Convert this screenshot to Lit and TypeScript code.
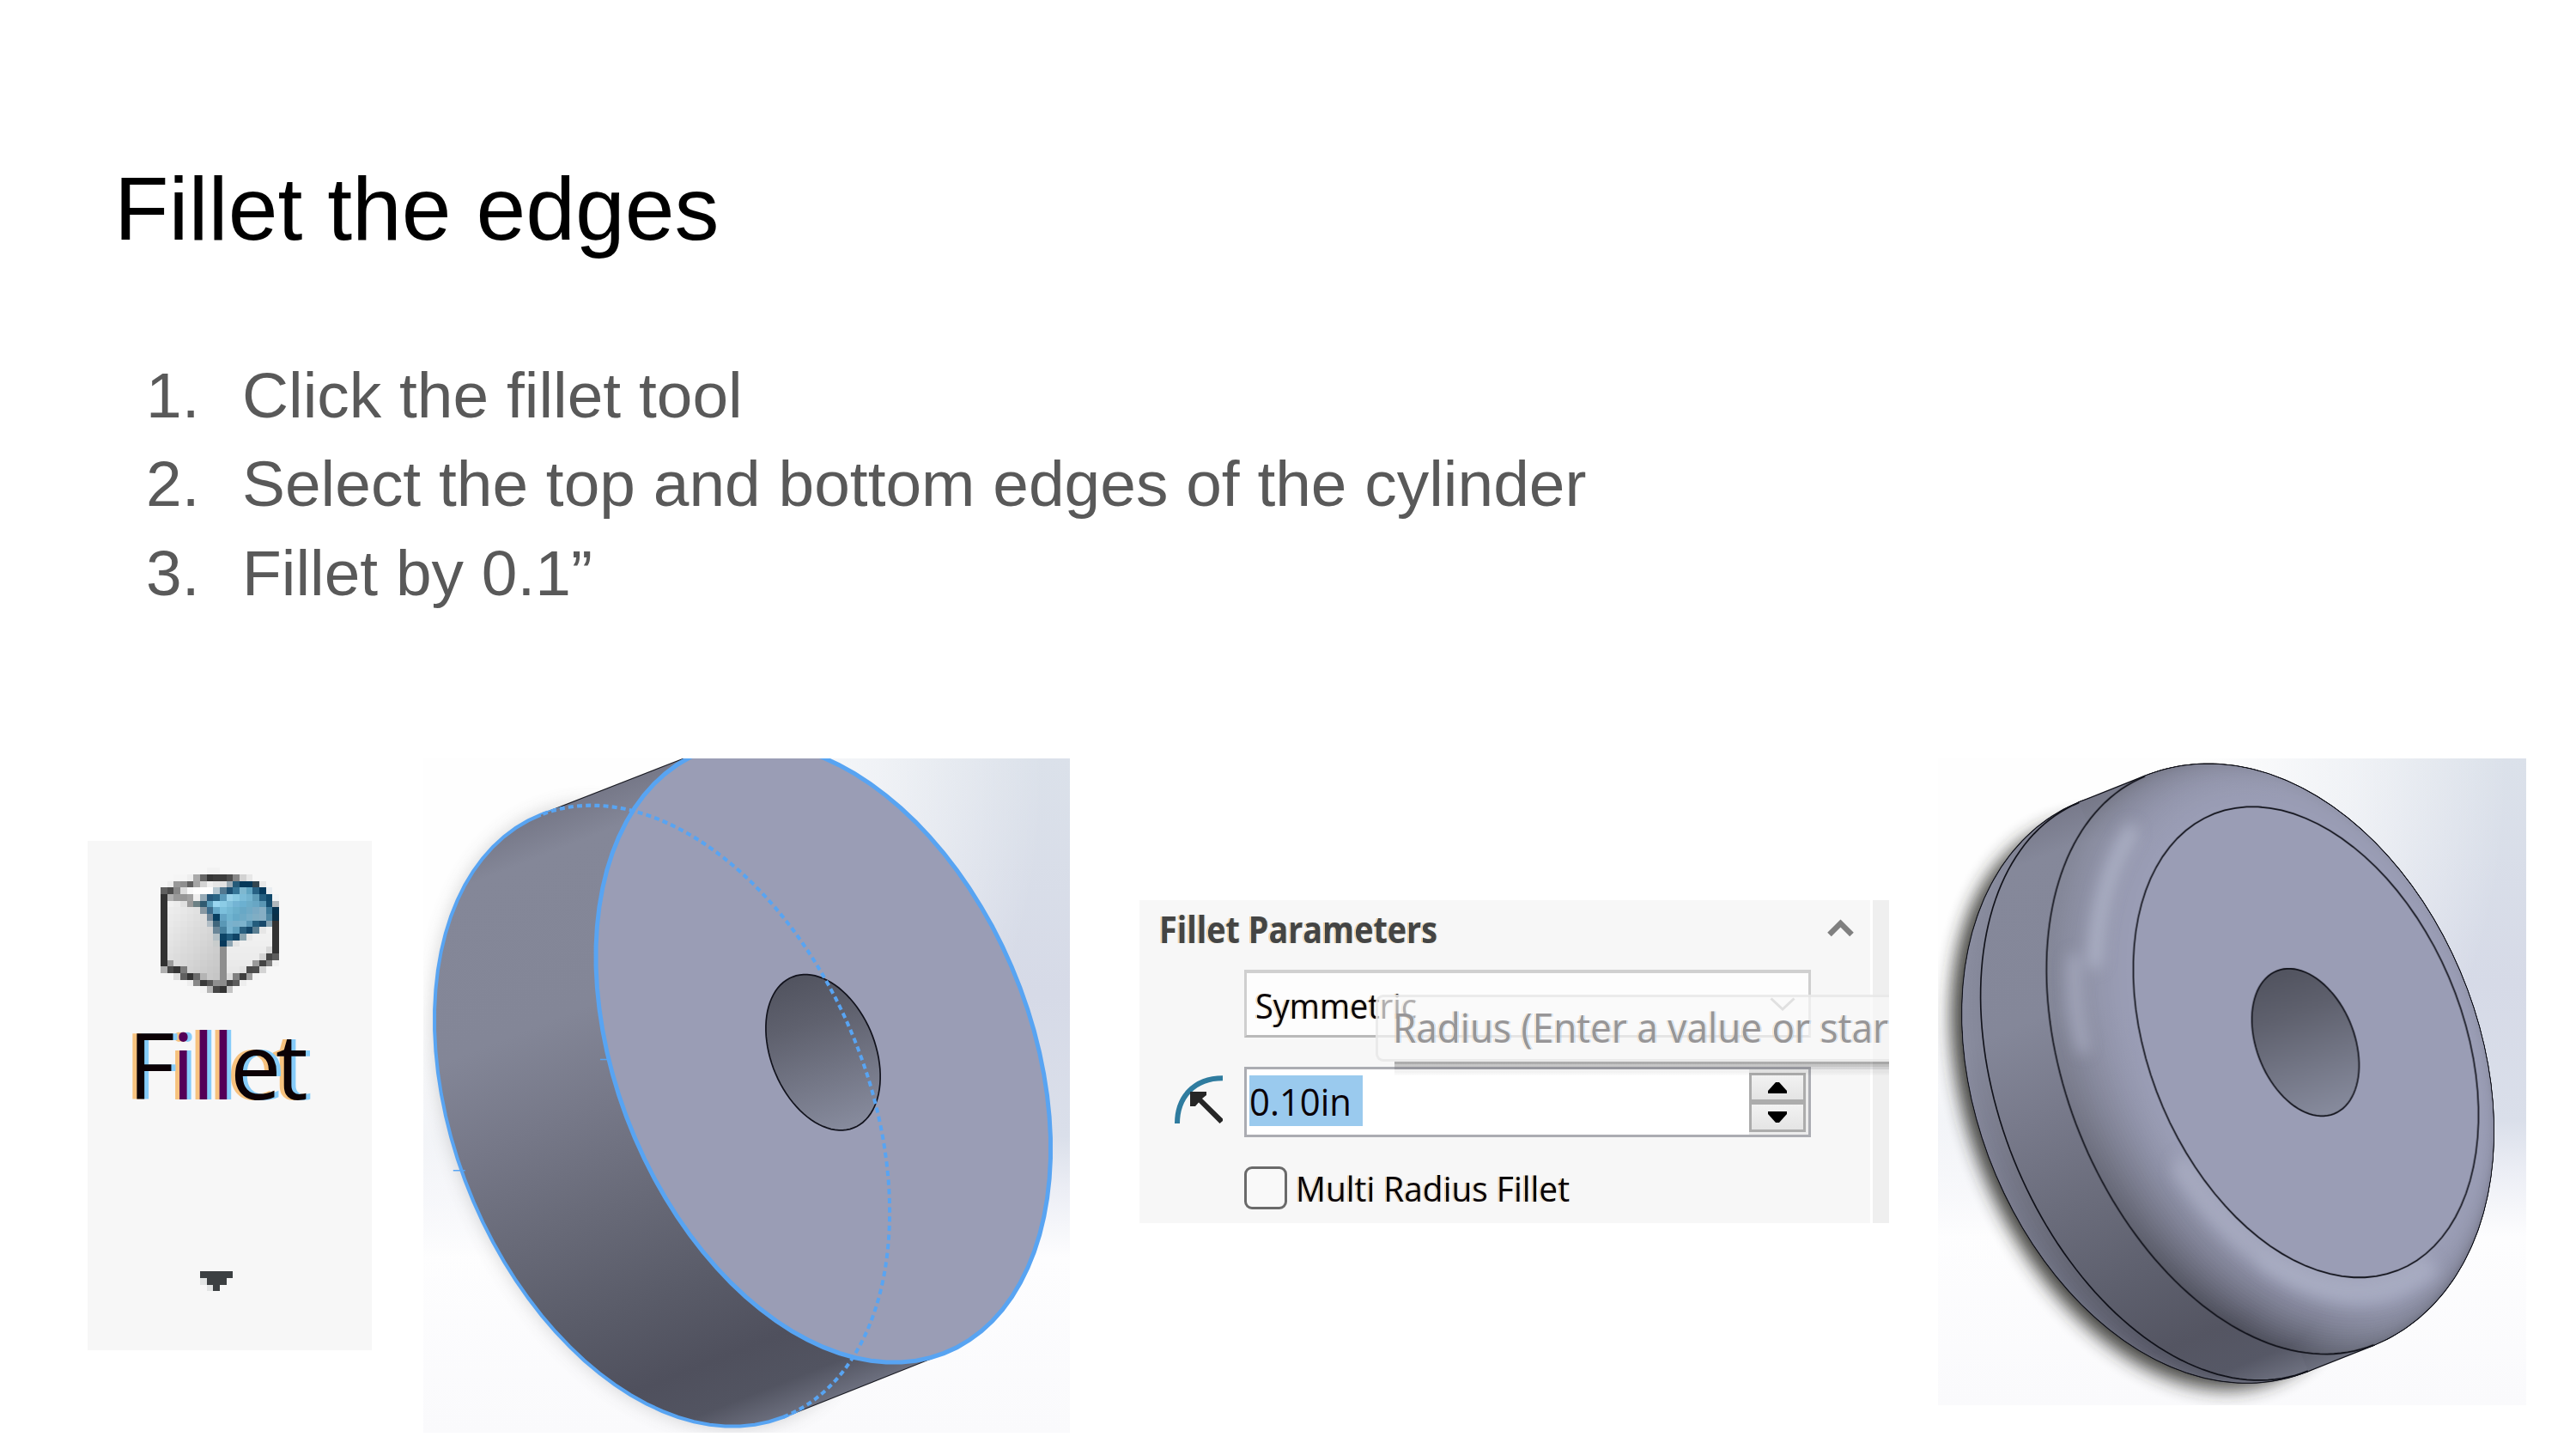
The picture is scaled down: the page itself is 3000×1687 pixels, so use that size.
import { LitElement, html, svg, css } from "lit";
import { customElement } from "lit/decorators.js";

/* ---------- geometry of tilted discs ---------- */

interface Disc { cx: number; cy: number; hw: number; hh: number }
type Pt = [number, number];
const TILT = 0.31;
const ROOT = Math.sqrt(1 - TILT * TILT);

const at = (d: Disc, t: number): Pt => [
  d.cx + d.hw * (ROOT * Math.cos(t) + TILT * Math.sin(t)),
  d.cy + d.hh * Math.sin(t),
];
const trace = (pts: Pt[]) => "M" + pts.map((p) => p[0].toFixed(1) + " " + p[1].toFixed(1)).join("L");
const poly = (pts: Pt[]) => trace(pts) + "Z";
const arc = (d: Disc, from: number, to: number) => {
  const pts: Pt[] = [];
  for (let i = 0; i <= 90; i++) pts.push(at(d, from + ((to - from) * i) / 90));
  return trace(pts);
};
const discPath = (d: Disc) => arc(d, 0, Math.PI * 2) + "Z";
const NORMAL: Pt = [0.3525, 0.9358];
const tangent = (d: Disc) =>
  Math.atan2(d.hw * TILT * NORMAL[0] + d.hh * NORMAL[1], d.hw * ROOT * NORMAL[0]);
const reach = (d: Disc) =>
  Math.hypot(d.hw * TILT * NORMAL[0] + d.hh * NORMAL[1], d.hw * ROOT * NORMAL[0]);
const wall = (a: Disc, b: Disc) => {
  const t = tangent(a);
  return poly([at(a, t), at(b, t), at(b, t + Math.PI), at(a, t + Math.PI)]);
};

/* ---------- shading ---------- */

type Rgb = [number, number, number];
const FACE: Rgb = [154, 157, 181];
const SIDE: [number, Rgb][] = [
  [0, [118, 120, 136]],
  [0.06, [132, 135, 152]],
  [0.3, [131, 134, 151]],
  [0.45, [118, 120, 136]],
  [0.6, [104, 106, 120]],
  [0.75, [90, 92, 105]],
  [0.88, [79, 80, 93]],
  [0.95, [82, 84, 97]],
  [1, [108, 111, 126]],
];
const mix = (a: Rgb, b: Rgb, k: number) =>
  `rgb(${a.map((v, i) => Math.round(v + (b[i] - v) * k)).join(",")})`;
const shade = (id: string, d: Disc, k: number) => {
  const r = reach(d);
  return svg`<linearGradient id=${id} gradientUnits="userSpaceOnUse"
    x1=${d.cx - NORMAL[0] * r} y1=${d.cy - NORMAL[1] * r}
    x2=${d.cx + NORMAL[0] * r} y2=${d.cy + NORMAL[1] * r}>
    ${SIDE.map(([o, c]) => svg`<stop offset=${o} stop-color=${mix(c, FACE, k)}></stop>`)}
  </linearGradient>`;
};
const backdrop = (w: number, h: number) => svg`
  <linearGradient id="sky" x1="0" y1="0" x2="0" y2="1">
    <stop offset="0" stop-color="#dbe1ea"></stop><stop offset=".35" stop-color="#d6dae7"></stop>
    <stop offset=".56" stop-color="#dadfea"></stop><stop offset=".64" stop-color="#eceef5"></stop>
    <stop offset=".74" stop-color="#fdfdfe"></stop><stop offset="1" stop-color="#fafafc"></stop>
  </linearGradient>
  <radialGradient id="glow" gradientUnits="userSpaceOnUse" cx=${w * 0.12} cy="60" r=${h * 0.86}>
    <stop offset="0" stop-color="#fefefe"></stop><stop offset=".4" stop-color="#fefefe"></stop>
    <stop offset=".7" stop-color="#fefefe" stop-opacity=".6"></stop>
    <stop offset="1" stop-color="#fefefe" stop-opacity="0"></stop>
  </radialGradient>
  <linearGradient id="bore" x1=".35" y1="0" x2=".6" y2="1">
    <stop offset="0" stop-color="#525460"></stop><stop offset=".3" stop-color="#5f616e"></stop>
    <stop offset="1" stop-color="#868a9c"></stop>
  </linearGradient>
  <filter id="soft" x="-30%" y="-30%" width="160%" height="160%"><feGaussianBlur stdDeviation="22"></feGaussianBlur></filter>
  <filter id="blur" filterUnits="userSpaceOnUse" x="0" y="0" width="1600" height="1600"><feGaussianBlur stdDeviation="17"></feGaussianBlur></filter>`;

@customElement("cylinder-view")
export class CylinderView extends LitElement {
  static styles = css`
    :host { display: block; width: 753px; height: 785px; }
    svg { display: block; width: 100%; height: 100%; }
    .edge { fill: none; stroke: #58a4f2; stroke-width: 10; }
    .edge.thin { stroke-width: 8; }
    .edge.hidden { stroke-width: 8; stroke-dasharray: 12 8.5; }
  `;
  render() {
    const front: Disc = { cx: 962.5, cy: 682, hw: 532.5, hh: 693 };
    const back: Disc = { cx: 585, cy: 824, hw: 533, hh: 694 };
    const hole: Disc = { cx: 962, cy: 682, hw: 134, hh: 174 };
    const t = tangent(back);
    return html`<svg viewBox="26 25 1514 1507" preserveAspectRatio="none">
      <defs>${backdrop(1514, 1507)}${shade("side", back, 0)}</defs>
      <rect x="26" y="25" width="1514" height="1507" fill="url(#sky)"></rect>
      <rect x="26" y="25" width="1514" height="1507" fill="url(#glow)"></rect>
      <path d=${discPath(back)} fill="#555" opacity=".3" filter="url(#soft)"></path>
      <path d=${wall(back, front)} fill="url(#side)" stroke="#1b1c24" stroke-width="4"></path>
      <path d=${discPath(back)} fill="url(#side)"></path>
      <path class="edge thin" d=${discPath(back)}></path>
      <path d=${wall(back, front)} fill="url(#side)"></path>
      <path d=${discPath(front)} fill="#9a9db5"></path>
      <path d=${discPath(hole)} fill="url(#bore)" stroke="#11121c" stroke-width="3.4"></path>
      <path class="edge" d=${discPath(front)}></path>
      <path class="edge hidden" d=${arc(back, t, t - Math.PI)}></path>
      <path d="M96 946h28M440 698h22" stroke="#58a4f2" stroke-width="3"></path>
    </svg>`;
  }
}

@customElement("filleted-view")
export class FilletedView extends LitElement {
  static styles = css`
    :host { display: block; width: 685px; height: 753px; }
    svg { display: block; width: 100%; height: 100%; }
    .line { fill: none; stroke: #11121a; stroke-width: 3.6; }
    .rim { fill: #11121a; stroke: #11121a; stroke-width: 5; }
  `;
  render() {
    const ring = (depth: number, c: number): Disc => ({
      cx: 970 - depth,
      cy: 690 + depth * 0.367,
      hw: 438 + 102 * c,
      hh: 551 + 136 * c,
    });
    const N = 30;
    const frontRings = Array.from({ length: N + 1 }, (_, i) => {
      const a = (i / N) * (Math.PI / 2);
      return { d: ring(118 * (1 - Math.sin(a)), Math.cos(a)), k: Math.pow(Math.sin(a), 1.25) };
    });
    const M = 14;
    const backRings = Array.from({ length: M + 1 }, (_, i) => {
      const a = (1 - i / M) * (Math.PI / 2);
      return { d: ring(285 + 108 * Math.sin(a), Math.cos(a)), k: 0.34 * Math.sin(a) + 0.06 };
    });
    const a = ring(285, 1);
    const b = ring(118, 1);
    const face = ring(0, 0);
    const sheen = ring(14, 0.12);
    const hole: Disc = { cx: 969, cy: 690.5, hw: 136, hh: 172.5 };
    const t = tangent(b);
    return html`<svg viewBox="37 26 1492 1514" preserveAspectRatio="none">
      <defs>
        ${backdrop(1492, 1514)}${shade("side", a, 0)}
        ${backRings.map((r, i) => shade("b" + i, r.d, r.k))}
        ${frontRings.map((r, i) => shade("f" + i, r.d, r.k))}
      </defs>
      <rect x="37" y="26" width="1492" height="1514" fill="url(#sky)"></rect>
      <rect x="37" y="26" width="1492" height="1514" fill="url(#glow)"></rect>
      <path d=${discPath({ cx: 604, cy: 834, hw: 533, hh: 668 })} fill="#2c2c25" opacity=".88" filter="url(#soft)"></path>
      ${backRings.map((r) => svg`<path class="rim" d=${discPath(r.d)}></path>`)}
      ${frontRings.map((r) => svg`<path class="rim" d=${discPath(r.d)}></path>`)}
      <path class="rim" d=${wall(a, b)}></path>
      ${backRings.map((r, i) => svg`<path d=${discPath(r.d)} fill=${`url(#b${i})`}></path>`)}
      <path d=${wall(a, b)} fill="url(#side)"></path>
      <path d=${discPath(b)} fill="url(#side)"></path>
      ${frontRings.map((r, i) => svg`<path d=${discPath(r.d)} fill=${`url(#f${i})`}></path>`)}
      <path class="line" d=${arc(a, t, t + Math.PI)}></path>
      <g filter="url(#blur)" fill="none" stroke-linecap="round">
        <path d=${arc(sheen, 1.15, 2.6)} stroke="#a9adc2" stroke-width="58" opacity=".8"></path>
        <path d="M525 200C465 290 440 400 435 500" stroke="#b4b8cc" stroke-width="38" opacity=".7"></path>
        <path d="M383 500C380 570 388 640 405 700" stroke="#adb1c6" stroke-width="34" opacity=".65"></path>
        <path d="M860 1205C960 1268 1040 1288 1110 1288C1180 1288 1240 1262 1290 1225" stroke="#abafc5" stroke-width="30" opacity=".8"></path>
      </g>
      <path class="line" d=${arc(b, t, t + Math.PI)}></path>
      <path d=${discPath(face)} fill="#9a9db5"></path>
      <path class="line" d=${discPath(face)}></path>
      <path d=${discPath(hole)} fill="url(#bore)" stroke="#11121a" stroke-width="3.6"></path>
    </svg>`;
  }
}

/* ---------- toolbar button ---------- */

/* One token per cell: "." empty, L / R the two lit faces, 2-digit grey or 6-digit colour. */
const CUBE = [
  ". . . . . . . f2 f2 . . . . . . . . .",
  ". . f5 f5 ee aa 65 35 3c 3c 4e 86 d2 e8 . . . .",
  "f6 ee 99 8e 60 a5 d4 f0 e6 e2 9aaab4 245a78 06395a 06395a 334650 e8 . .",
  "60 4c 88 dc f8 fe ff fe b4c6d0 527890 1b5072 357596 7fb8d0 62a5c2 276284 04395c e8ecf0 .",
  "32 b0 99 96 a0 ee 96aab6 26587a 2a6484 5a9aba 98d2ea 8acae2 7cbcd8 74b4d0 5e9cb8 245e80 10486a f2f4f6",
  "32 f0 ec e0 9a 6c8084 305a70 5a9cba 9ad6f0 8ccce6 80c0dc 74b4d4 6cb0d0 6cacc8 68a6c4 5a96b4 144c6e b0b8bc",
  "32 L L L L L 8898a2 3c6c8c 66a8c8 7cc0dc 74b8d4 6cb0cc 68a8c6 70aac6 7aaac4 86aec4 3c7898 06324e",
  "32 L L L L L L 72889a 083e60 64a4c4 70b4d0 66aac8 6eaac6 78aec8 80aec4 86aec4 4e86a2 0a3048",
  "32 L L L L L L b0bcc4 40667c 5a98b6 78b2ce 7ab0ca 7cb2cc 5a96b4 245c7c 18486a 84a0b0 32",
  "32 L L L L L L L 6a8698 46809e 78b4d0 60a0be 2a6080 134668 5a7e92 e6 R 32",
  "32 L L L L L L L b4c0c6 0c4466 205c7e 104466 8aa4b0 e8 R R R 32",
  "32 L L L L L L L c8cccc 08385a 8ca4b2 e4 R R R R R 32",
  "32 L L L L L L L L 8e R R R R R R d8 32",
  "32 L L L L L L L L 8e R R R R R d4 46 5c",
  "32 9a L L L L L L L 8e R R R R 9a 44 80 f0",
  "b0 4a 34 7a L L L L L 8e R R e2 4a 4e d4 . .",
  ". . dd 60 34 6c b4 L L 8e dc 80 3e 9e f4 . . .",
  ". . . . ee 88 3a 58 90 8c 44 5c ee . . . . .",
  ". . . . . . f4 b6 46 34 c4 . . . . . . .",
];
const cellColor = (tok: string, row: number, col: number) => {
  if (tok === "L") { const v = Math.round(241 - (row - 5) * 1.9 - col * 2.8); return `rgb(${v},${v},${v})`; }
  if (tok === "R") { const v = Math.round(242 - (row - 9) * 1.6); return `rgb(${v},${v},${v})`; }
  return tok.length === 2 ? "#" + tok + tok + tok : "#" + tok;
};

@customElement("fillet-button")
export class FilletButton extends LitElement {
  static styles = css`
    :host { display: block; width: 331px; height: 593px; background: #f7f7f7; }
    svg { display: block; }
    text { font: 106px "Open Sans", "Noto Sans", sans-serif; fill: #0c0206;
      filter: drop-shadow(5px 0 0 #86ccfa) drop-shadow(-5px 0 0 #f7c27e); }
    .bar { fill: #540058; }
  `;
  render() {
    const s = 7.667;
    return html`<svg width="331" height="593" viewBox="102 979 331 593">
      <g shape-rendering="crispEdges">
        ${CUBE.map((line, r) =>
          line.split(" ").map((tok, c) =>
            tok === "." ? null : svg`<rect x=${187 + c * s} y=${1010.3 + r * s} width=${s} height=${s}
              fill=${cellColor(tok, r, c)}></rect>`))}
        <path fill="#e2e4e4" d="M233 1488h8v7.5h-8zM241 1495.5h7v7.5h-7z"></path>
        <path fill="#3c4042" d="M233 1480h38v7.5h-7v8h-8v7.5h-8v-7.5h-7v-8h-8z"></path>
      </g>
      <text x="149 200 223.5 246.5 268 321" y="1279.5">F<tspan class="bar">ill</tspan>et</text>
    </svg>`;
  }
}

/* ---------- parameter panel ---------- */

const label = (cls: string, text: string, width: number, height: number, baseline: number) => html`
  <svg class="label ${cls}" width=${width} height=${height}>
    <text x="0" y=${baseline} textLength=${width} lengthAdjust="spacingAndGlyphs">${text}</text>
  </svg>`;

@customElement("fillet-parameters")
export class FilletParameters extends LitElement {
  static styles = css`
    :host { display: flex; position: relative; width: 873px; height: 376px; background: #f7f7f7; overflow: hidden; }
    .body { flex: 1; display: flex; flex-direction: column; box-sizing: border-box; padding-top: 12px; }
    .track { width: 19px; border-left: 3px solid #fff; background: #efefef; }
    svg { display: block; overflow: visible; flex: none; }
    .label text { font-family: "Open Sans", "Noto Sans", sans-serif; font-size: 40px; fill: #0a0006;
      filter: drop-shadow(1.5px 0 0 rgba(120, 195, 255, .6)) drop-shadow(-1.5px 0 0 rgba(248, 190, 110, .6)); }
    .label.head text { font-size: 43px; font-weight: 700; fill: #444; }
    .label.val text { font-size: 44px; filter: none; }
    .label.tip text { font-size: 47px; fill: #979597; filter: drop-shadow(2px 0 0 rgba(160, 205, 250, .5)) drop-shadow(-2px 0 0 rgba(250, 210, 160, .5)); }
    .top { display: flex; height: 69px; padding: 0 19px 0 23px; justify-content: space-between; }
    .top .chev { margin-top: 11px; }
    .select { display: flex; justify-content: space-between; box-sizing: border-box; width: 660px; height: 79px; margin-left: 122px;
      border: 3px solid #cfcfcf; border-top: 4px solid #d0d0d0; border-bottom-color: #b9b9b9; background: #fdfdfd; padding: 0 15px 0 10px; }
    .select .chev { margin-top: 28px; }
    .line { display: flex; height: 82px; margin-top: 34px; }
    .icon { margin: 10px 24px 0 41px; }
    .input { display: flex; justify-content: space-between; box-sizing: border-box; width: 660px; border: 3px solid #abacb2; background: #fff; padding-left: 3px; }
    .picked { width: 132px; height: 59px; margin-top: 7px; background: #9acaee; }
    .spin { box-sizing: border-box; width: 69px; padding: 4px 3px 3px 0; background: #ececec; }
    .arrows { display: flex; flex-direction: column; gap: 6px; box-sizing: border-box; height: 69px; background: #acacac; padding: 3px; }
    .arrows div { flex: 1; display: flex; align-items: center; justify-content: center; background: linear-gradient(#f2f2f2, #e4e4e4); }
    .check { display: flex; gap: 10px; margin: 34px 0 0 122px; }
    .box { box-sizing: border-box; width: 50px; height: 50px; border: 3px solid #6a6a6a; border-radius: 9px; background: #f9f9f9; }
    .tooltip { position: absolute; left: 275px; top: 110px; width: 620px; height: 78px; box-sizing: border-box;
      border: 3px solid rgba(225, 225, 225, .6); border-radius: 9px; background: rgba(248, 248, 248, .7); padding-left: 17px; }
    .shade { position: absolute; left: 297px; top: 188px; right: 0; height: 16px;
      background: linear-gradient(rgba(0,0,0,.3) 0 3px, rgba(0,0,0,.2) 3px 6px, rgba(40,40,50,.16) 6px 9px, rgba(0,0,0,.05) 9px 12px, rgba(0,0,0,.01)); }
  `;
  render() {
    return html`
      <div class="body">
        <div class="top">
          ${label("head", "Fillet Parameters", 324, 50, 38)}
          <svg class="chev" width="31" height="19"><path d="M2.5 17L15.500 4L28.500 17" fill="none" stroke="#808080" stroke-width="6.5"></path></svg>
        </div>
        <div class="select">
          ${label("", "Symmetric", 188, 70, 53)}
          <svg class="chev" width="30" height="15"><path d="M1.500 1.500L15 14L28.500 1.500" fill="none" stroke="#a8a8a8" stroke-width="3"></path></svg>
        </div>
        <div class="line">
          <svg class="icon" width="57" height="56" viewBox="0 0 57 56">
            <path d="M3 56C3 26 22 3.200 56 3.200" fill="none" stroke="#2f7c9f" stroke-width="6"></path>
            <path d="M18 19h19v4l-5 4L56 50.500V53l-3.500 3L28 31.500L24 36h-6z" fill="#262626"></path>
          </svg>
          <div class="input">
            <div class="picked">${label("val", "0.10in", 119, 59, 47)}</div>
            <div class="spin"><div class="arrows">
              <div><svg width="22" height="13"><path d="M0 13V10L9 0h4L22 10v3z"></path></svg></div>
              <div><svg width="22" height="13"><path d="M0 0V3L9 13h4L22 3V0z"></path></svg></div>
            </div></div>
          </div>
        </div>
        <div class="check"><div class="box"></div>${label("", "Multi Radius Fillet", 319, 50, 41)}</div>
      </div>
      <div class="track"></div>
      <div class="tooltip">${label("tip", "Radius (Enter a value or star", 577, 70, 53)}</div>
      <div class="shade"></div>`;
  }
}

/* ---------- slide ---------- */

@customElement("app-root")
export class AppRoot extends LitElement {
  static styles = css`
    :host { display: block; width: 3000px; height: 1687px; overflow: hidden; background: #fff;
      font-family: "Liberation Sans", Arial, Helvetica, sans-serif; font-variant-ligatures: none; }
    h1 { margin: 0; padding: 183px 0 0 133px; font-size: 103.900px; font-weight: 400; line-height: 120px; color: #000; }
    ol { list-style: none; margin: 0; padding: 106px 0 0 170px; font-size: 74.900px; line-height: 103.300px; color: #595959; }
    li { display: flex; }
    .num { width: 112px; }
    .row { display: flex; align-items: flex-start; margin-top: 164px; padding-left: 102px; }
    fillet-button { margin: 96px 60px 0 0; }
    fillet-parameters { margin: 165px 57px 0 81px; }
  `;
  render() {
    const steps = ["Click the fillet tool", "Select the top and bottom edges of the cylinder", "Fillet by 0.1”"];
    return html`
      <h1>Fillet the edges</h1>
      <ol>${steps.map((s, i) => html`<li><span class="num">${i + 1}.</span><span>${s}</span></li>`)}</ol>
      <div class="row">
        <fillet-button></fillet-button>
        <cylinder-view></cylinder-view>
        <fillet-parameters></fillet-parameters>
        <filleted-view></filleted-view>
      </div>`;
  }
}
